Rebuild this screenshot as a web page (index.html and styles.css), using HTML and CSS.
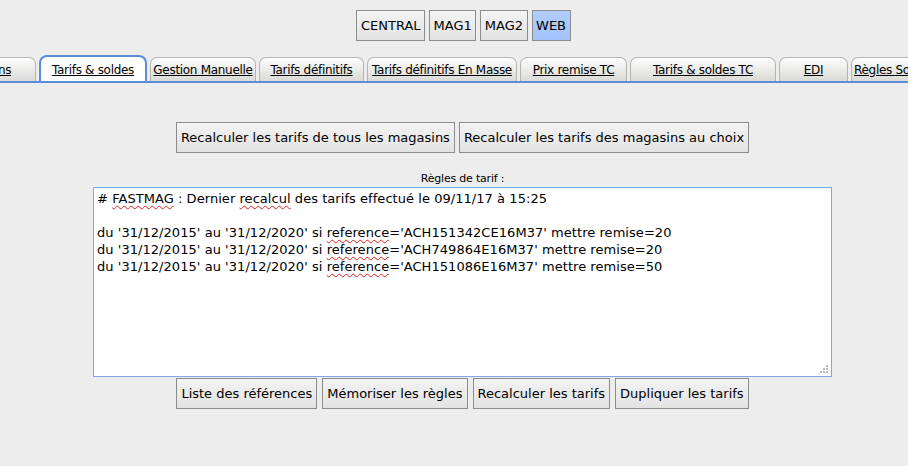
FILE: index.html
```html
<!DOCTYPE html>
<html>
<head>
<meta charset="utf-8">
<link rel="stylesheet" href="styles.css">
</head>
<body>
<div class="page">
  <div class="stores">
    <button class="btn store">CENTRAL</button>
    <button class="btn store">MAG1</button>
    <button class="btn store">MAG2</button>
    <button class="btn store active">WEB</button>
  </div>
  <div class="tabs-wrap">
    <ul class="tabs">
      <li class="tab t0"><a>Promotions</a></li>
      <li class="tab t1 current"><a>Tarifs &amp; soldes</a></li>
      <li class="tab t2"><a>Gestion Manuelle</a></li>
      <li class="tab t3"><a>Tarifs définitifs</a></li>
      <li class="tab t4"><a>Tarifs définitifs En Masse</a></li>
      <li class="tab t5"><a>Prix remise TC</a></li>
      <li class="tab t6"><a>Tarifs &amp; soldes TC</a></li>
      <li class="tab t7"><a>EDI</a></li>
      <li class="tab t8"><a>Règles Soldes</a></li>
    </ul>
  </div>
  <div class="content">
    <div class="recalc">
      <button class="btn big">Recalculer les tarifs de tous les magasins</button>
      <button class="btn big">Recalculer les tarifs des magasins au choix</button>
    </div>
    <div class="label">Règles de tarif :</div>
    <div class="rules">
      <div class="line"># <span class="sp">FASTMAG</span> : Dernier <span class="sp">recalcul</span> des tarifs effectué le 09/11/17 à 15:25</div>
      <div class="line">&nbsp;</div>
      <div class="line">du '31/12/2015' au '31/12/2020' si <span class="sp">reference</span>='ACH151342CE16M37' mettre remise=20</div>
      <div class="line">du '31/12/2015' au '31/12/2020' si <span class="sp">reference</span>='ACH749864E16M37' mettre remise=20</div>
      <div class="line">du '31/12/2015' au '31/12/2020' si <span class="sp">reference</span>='ACH151086E16M37' mettre remise=50</div>
      <svg class="grip" width="8" height="8" viewBox="0 0 8 8"><rect x="6" y="0" width="2" height="2" fill="#b8b8b8"/><rect x="3" y="3" width="2" height="2" fill="#b8b8b8"/><rect x="6" y="3" width="2" height="2" fill="#b8b8b8"/><rect x="0" y="6" width="2" height="2" fill="#b8b8b8"/><rect x="3" y="6" width="2" height="2" fill="#b8b8b8"/><rect x="6" y="6" width="2" height="2" fill="#b8b8b8"/></svg>
    </div>
    <div class="actions">
      <button class="btn big">Liste des références</button>
      <button class="btn big">Mémoriser les règles</button>
      <button class="btn big">Recalculer les tarifs</button>
      <button class="btn big">Dupliquer les tarifs</button>
    </div>
  </div>
</div>
</body>
</html>
```
FILE: styles.css
```css
html, body {
  margin: 0;
  padding: 0;
  background: #ededed;
  overflow: hidden;
}
body {
  font-family: "DejaVu Sans", Verdana, sans-serif;
  font-size: 12px;
  color: #000;
}
.page {
  width: 908px;
  height: 466px;
}
.stores {
  display: flex;
  justify-content: center;
  gap: 4px;
  padding: 10px 0 0 19px;
}
.btn {
  font-family: "DejaVu Sans", Verdana, sans-serif;
  font-size: 13px;
  letter-spacing: 0;
  color: #000;
  border: 1px solid #8c8c8c;
  background: linear-gradient(#f3f3f3, #e3e3e3);
  height: 31px;
  margin: 0;
  padding: 0 4px;
  border-radius: 0;
  box-sizing: border-box;
}
.store {
  padding: 0 3.5px;
}
.store.active {
  background: linear-gradient(#b0cdfd, #a2c3fb);
}
.tabs-wrap {
  margin-top: 14px;
  border-bottom: 2px solid #5b8dd9;
  height: 26px;
  overflow: hidden;
}
.tabs {
  list-style: none;
  margin: 0 0 0 -78px;
  padding: 0;
  display: flex;
  gap: 3px;
  height: 26px;
  align-items: flex-end;
}
.tab {
  flex: none;
  height: 24px;
  box-sizing: border-box;
  border: 1px solid #b4b4b4;
  border-bottom: none;
  border-radius: 7px 7px 0 0;
  background: linear-gradient(#fdfdfd, #dadad6);
  display: flex;
  align-items: center;
  justify-content: center;
  font-size: 12px;
}
.tab a {
  text-decoration: underline;
  color: #000;
  letter-spacing: -0.3px;
  padding-top: 1px;
}
.tab.current {
  height: 26px;
  background: #fff;
  border: 2px solid #5b8dd9;
  border-bottom: none;
  border-radius: 8px 8px 0 0;
}
.t0 { width: 114px; }
.t1 { width: 108px; }
.t2 { width: 106px; }
.t3 { width: 105px; }
.t4 { width: 150px; }
.t5 { width: 107px; }
.t6 { width: 146px; }
.t7 { width: 69px; }
.t8 { width: 110px; justify-content: flex-start; padding-left: 2px; }

.content {
  padding-left: 17px;
  display: flex;
  flex-direction: column;
  align-items: center;
}
.recalc {
  display: flex;
  gap: 4px;
  margin-top: 39px;
}
.label {
  font-size: 11px;
  margin-top: 19px;
  height: 15px;
  letter-spacing: -0.2px;
}
.rules {
  position: relative;
  width: 739px;
  height: 190px;
  box-sizing: border-box;
  background: #fff;
  border: 1px solid #7fa9e3;
  padding: 2px 3px;
  font-size: 13px;
  letter-spacing: 0.05px;
  line-height: 17px;
  margin-top: 0;
}
.sp {
  text-decoration: underline wavy #e02020;
  text-decoration-thickness: 1px;
  text-underline-offset: 2px;
}
.grip {
  position: absolute;
  right: 3px;
  bottom: 3px;
}
.actions {
  display: flex;
  gap: 5px;
  margin-top: 1px;
}
```
